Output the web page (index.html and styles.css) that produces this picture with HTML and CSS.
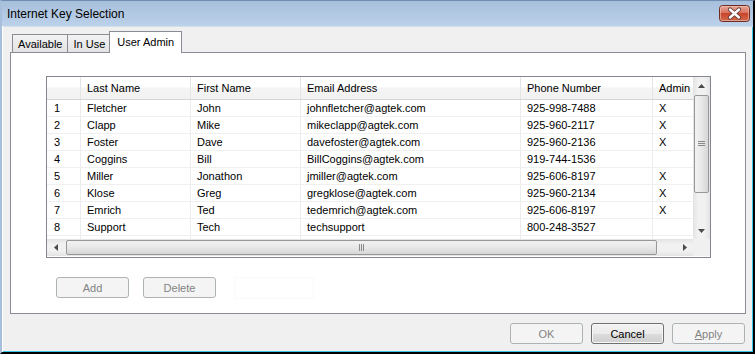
FILE: index.html
```html
<!DOCTYPE html>
<html lang="en">
<head>
  <meta charset="UTF-8">
  <title>Internet Key Selection</title>
  <link rel="stylesheet" href="styles.css">
</head>
<body>

<div class="window">
  <div class="titlebar">
    <span class="title">Internet Key Selection</span>
    <button class="close-btn" title="Close">
      <svg width="31" height="17" viewBox="0 0 31 17">
        <defs>
          <linearGradient id="closeGrad" x1="0" y1="0" x2="0" y2="1">
            <stop offset="0" stop-color="#e9a99b"/>
            <stop offset="0.45" stop-color="#d9735f"/>
            <stop offset="0.5" stop-color="#c8462c"/>
            <stop offset="1" stop-color="#d26a4f"/>
          </linearGradient>
        </defs>
        <rect x="0.5" y="0.5" width="30" height="16" rx="3" fill="url(#closeGrad)" stroke="#6e2c22"/>
        <rect x="1.5" y="1.5" width="28" height="14" rx="2" fill="none" stroke="#f0c4b8" stroke-opacity="0.6"/>
        <path d="M11 4.5 L20 12.5 M20 4.5 L11 12.5" stroke="#5a3a36" stroke-width="4.2" stroke-linecap="round"/>
        <path d="M11 4.5 L20 12.5 M20 4.5 L11 12.5" stroke="#ffffff" stroke-width="2.4" stroke-linecap="round"/>
      </svg>
    </button>
  </div>

  <div class="client">
    <div class="tabs">
      <div class="tab">Available</div>
      <div class="tab">In Use</div>
      <div class="tab active">User Admin</div>
    </div>

    <div class="tab-panel">
      <div class="grid">
        <div class="grid-view">
          <div class="row header">
            <div class="cell"></div>
            <div class="cell">Last Name</div>
            <div class="cell">First Name</div>
            <div class="cell">Email Address</div>
            <div class="cell">Phone Number</div>
            <div class="cell">Admin</div>
          </div>
          <div class="row">
            <div class="cell">1</div><div class="cell">Fletcher</div><div class="cell">John</div>
            <div class="cell">johnfletcher@agtek.com</div><div class="cell">925-998-7488</div><div class="cell">X</div>
          </div>
          <div class="row">
            <div class="cell">2</div><div class="cell">Clapp</div><div class="cell">Mike</div>
            <div class="cell">mikeclapp@agtek.com</div><div class="cell">925-960-2117</div><div class="cell">X</div>
          </div>
          <div class="row">
            <div class="cell">3</div><div class="cell">Foster</div><div class="cell">Dave</div>
            <div class="cell">davefoster@agtek.com</div><div class="cell">925-960-2136</div><div class="cell">X</div>
          </div>
          <div class="row">
            <div class="cell">4</div><div class="cell">Coggins</div><div class="cell">Bill</div>
            <div class="cell">BillCoggins@agtek.com</div><div class="cell">919-744-1536</div><div class="cell"></div>
          </div>
          <div class="row">
            <div class="cell">5</div><div class="cell">Miller</div><div class="cell">Jonathon</div>
            <div class="cell">jmiller@agtek.com</div><div class="cell">925-606-8197</div><div class="cell">X</div>
          </div>
          <div class="row">
            <div class="cell">6</div><div class="cell">Klose</div><div class="cell">Greg</div>
            <div class="cell">gregklose@agtek.com</div><div class="cell">925-960-2134</div><div class="cell">X</div>
          </div>
          <div class="row">
            <div class="cell">7</div><div class="cell">Emrich</div><div class="cell">Ted</div>
            <div class="cell">tedemrich@agtek.com</div><div class="cell">925-606-8197</div><div class="cell">X</div>
          </div>
          <div class="row">
            <div class="cell">8</div><div class="cell">Support</div><div class="cell">Tech</div>
            <div class="cell">techsupport</div><div class="cell">800-248-3527</div><div class="cell"></div>
          </div>
          <div class="row">
            <div class="cell"></div><div class="cell"></div><div class="cell"></div>
            <div class="cell"></div><div class="cell"></div><div class="cell"></div>
          </div>
        </div>

        <!-- vertical scrollbar -->
        <div class="vscroll">
          <div class="sb-btn"><svg width="7" height="4"><path d="M3.5 0 L7 4 L0 4 Z" fill="#4a4a4a"/></svg></div>
          <div class="sb-thumb v">
            <svg width="7" height="6"><path d="M0 0.5 H7 M0 2.5 H7 M0 4.5 H7" stroke="#8a8a8a"/></svg>
          </div>
          <div class="sb-space"></div>
          <div class="sb-btn"><svg width="7" height="4"><path d="M0 0 L7 0 L3.5 4 Z" fill="#4a4a4a"/></svg></div>
        </div>

        <!-- horizontal scrollbar -->
        <div class="hscroll">
          <div class="sb-btn"><svg width="4" height="7"><path d="M0 3.5 L4 0 L4 7 Z" fill="#4a4a4a"/></svg></div>
          <div class="sb-thumb h">
            <svg width="6" height="7"><path d="M0.5 0 V7 M2.5 0 V7 M4.5 0 V7" stroke="#8a8a8a"/></svg>
          </div>
          <div class="sb-space"></div>
          <div class="sb-btn"><svg width="4" height="7"><path d="M0 0 L4 3.5 L0 7 Z" fill="#4a4a4a"/></svg></div>
        </div>

        <div class="corner"></div>
      </div>

      <div class="panel-buttons">
        <button class="btn" disabled>Add</button>
        <button class="btn" disabled>Delete</button>
        <div class="ghost-box"></div>
      </div>
    </div>

    <div class="dialog-buttons">
      <button class="btn" disabled>OK</button>
      <button class="btn default">Cancel</button>
      <button class="btn" disabled><u>A</u>pply</button>
    </div>
  </div>
</div>

</body>
</html>
```

FILE: styles.css
```css
/* Page */
body {
  margin: 0;
  font-family: "Liberation Sans", Arial, sans-serif;
  font-size: 11px;
  color: #000;
  background-color: #f0f0f0;
}

/* Window frame */
.window {
  width: 755px;
  height: 354px;
  box-sizing: border-box;
  display: flex;
  flex-direction: column;
  border-top: 1px solid #6f8db2;
  border-left: 2px solid #a8bfdb;
  border-right: 2px solid #000;
  border-bottom: 2px solid #000;
  box-shadow: inset -1px -1px 0 #39c3e6;
  background-color: #f0f0f0;
}

/* Title bar */
.titlebar {
  height: 25px;
  flex-shrink: 0;
  display: flex;
  justify-content: space-between;
  align-items: flex-start;
  background: linear-gradient(#a7bfdb, #bcd1ea);
}

.title {
  font-size: 12px;
  margin: 6px 0 0 5px;
}

.close-btn {
  margin: 4px 3px 0 0;
  padding: 0;
  border: none;
  background: none;
  width: 31px;
  height: 17px;
  display: block;
}

.close-btn svg {
  display: block;
}

/* Client area */
.client {
  flex: 1;
  display: flex;
  flex-direction: column;
  padding: 5px 7px 0 7px;
  border-left: 1px solid #fff;
  box-shadow: inset 0 1px 0 #d5dfe9;
}

/* Tabs */
.tabs {
  display: flex;
  align-items: flex-end;
  height: 21px;
  padding-left: 2px;
}

.tab {
  height: 18px;
  box-sizing: border-box;
  padding: 2px 5px 0 5px;
  border: 1px solid #898c95;
  border-bottom: none;
  border-right: none;
  background: linear-gradient(#f2f2f2, #e3e3e3);
  line-height: 15px;
}

.tab.active {
  position: relative;
  z-index: 1;
  height: 22px;
  margin: 0 0 -1px -1px;
  padding: 3px 7px 0 7px;
  border-right: 1px solid #898c95;
  background: #fff;
}

/* Tab page */
.tab-panel {
  height: 262px;
  box-sizing: border-box;
  border: 1px solid #898c95;
  background: #fff;
  padding: 23px 34px 0 35px;
}

/* Data grid */
.grid {
  width: 665px;
  height: 182px;
  box-sizing: border-box;
  border: 1px solid #828790;
  display: grid;
  grid-template-columns: 646px 17px;
  grid-template-rows: 162px 17px;
}

.grid-view {
  overflow: hidden;
}

.row {
  display: grid;
  grid-template-columns: 34px 110px 110px 220px 132px 60px;
  height: 17px;
  box-sizing: border-box;
  border-bottom: 1px solid #f0f0f0;
}

.row.header {
  height: 23px;
  border-bottom: 1px solid #d5d5d5;
  background: linear-gradient(#ffffff 0%, #ffffff 45%, #f4f4f4 50%, #f2f2f2 100%);
}

.cell {
  box-sizing: border-box;
  border-right: 1px solid #ececec;
  padding: 1px 0 0 6px;
  line-height: 15px;
  white-space: nowrap;
  overflow: hidden;
}

.row .cell:first-child {
  padding-left: 7px;
}

.row.header .cell {
  line-height: 21px;
  border-right: 1px solid #e3e4e6;
}

/* Scrollbars */
.vscroll,
.hscroll {
  display: flex;
}

.vscroll {
  flex-direction: column;
  background: linear-gradient(90deg, #e3e3e3, #f1f1f1 30%, #f1f1f1 70%, #e3e3e3);
}

.hscroll {
  background: linear-gradient(#e3e3e3, #f1f1f1 30%, #f1f1f1 70%, #e3e3e3);
}

.sb-btn {
  width: 17px;
  height: 17px;
  flex-shrink: 0;
  display: flex;
  align-items: center;
  justify-content: center;
}

.sb-space {
  flex: 1;
}

.sb-thumb {
  box-sizing: border-box;
  border: 1px solid #979797;
  border-radius: 2px;
  display: flex;
  align-items: center;
  justify-content: center;
}

.sb-thumb.v {
  height: 98px;
  margin: 1px 1px 0 1px;
  background: linear-gradient(90deg, #f2f2f2, #e8e8e8 50%, #d6d6d6);
}

.sb-thumb.h {
  width: 591px;
  margin: 1px 0 1px 2px;
  background: linear-gradient(#f2f2f2, #e8e8e8 50%, #d6d6d6);
}

.corner {
  background: #f0f0f0;
}

/* Buttons */
.btn {
  width: 73px;
  height: 21px;
  box-sizing: border-box;
  padding: 0;
  font-family: inherit;
  font-size: 11px;
  border-radius: 3px;
  border: 1px solid #707070;
  color: #000;
  background: linear-gradient(#f2f2f2 0%, #ebebeb 50%, #dddddd 51%, #cfcfcf 100%);
}

.btn:disabled {
  color: #838383;
  border-color: #adb2b5;
  background: #f4f4f4;
}

.btn.default {
  box-shadow: inset 0 0 0 1px #f8f8f8;
}

.panel-buttons {
  display: flex;
  gap: 14px;
  margin: 19px 0 0 10px;
}

.ghost-box {
  width: 78px;
  height: 20px;
  margin-left: 4px;
  border: 1px solid #fafafa;
  border-radius: 2px;
}

.dialog-buttons {
  display: flex;
  justify-content: flex-end;
  gap: 8px;
  margin-top: 9px;
  padding-right: 1px;
}
```
